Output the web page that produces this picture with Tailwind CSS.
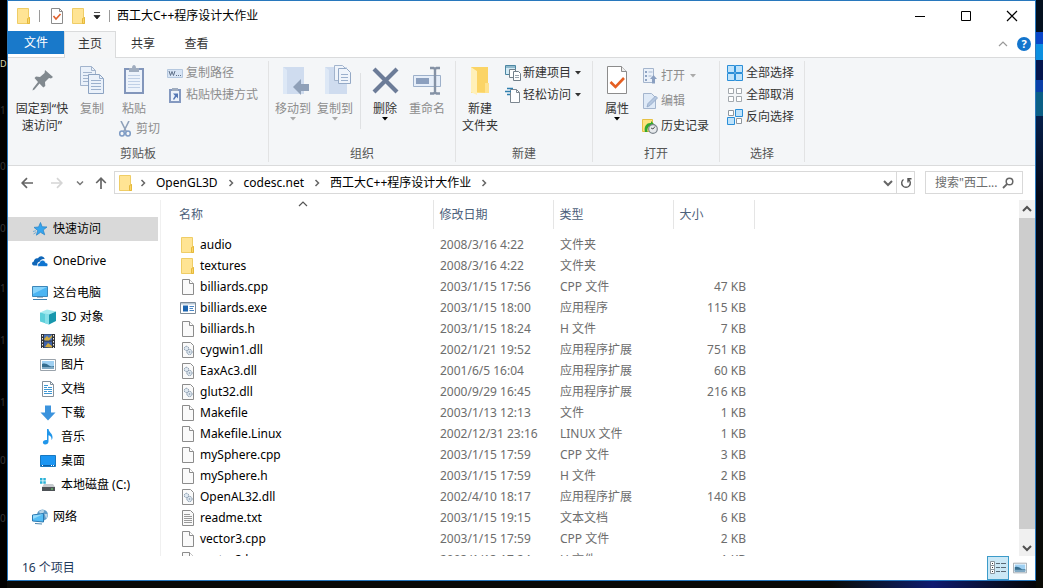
<!DOCTYPE html>
<html lang="zh-CN">
<head>
    <meta charset="UTF-8">
    <meta name="viewport" content="width=device-width, initial-scale=1.0">
    <title>西工大C++程序设计大作业</title>
    <script src="https://cdn.jsdelivr.net/npm/@tailwindcss/browser@4"></script>
</head>
<body class="h-screen overflow-hidden bg-black font-['Noto_Sans','Noto_Sans_CJK_SC',sans-serif] text-xs leading-4 text-black">

<!-- Icon set -->
<svg class="hidden" xmlns="http://www.w3.org/2000/svg">
    <symbol id="folder" viewBox="0 0 16 16">
        <path d="M1.500.5h11v9h1v6h-12z" fill="#ffe494" stroke="#efcd66"/>
        <path d="M11.500 10.500l2-1v6h-2z" fill="#fbd668" stroke="#e5b93c"/>
    </symbol>
    <symbol id="big-folder" viewBox="0 0 20 32">
        <path d="M1 2h17v15h-1v11H1z" fill="#ffe08a"/>
        <path d="M1 2l6 4v24l-6-3z" fill="#fff0b8"/>
        <path d="M7 27V6L1 2h1l16 0v16l1 1v9z" fill="#fbd465"/>
        <path d="M15 18h4v10h-4z" fill="#ffe38f"/>
    </symbol>
    <symbol id="page" viewBox="0 0 16 16">
        <path d="M2.500.5h7l4 4v11h-11z" fill="#fafafa" stroke="#8c8c8c"/>
        <path d="M9.500.5v4h4" fill="#fff" stroke="#8c8c8c"/>
    </symbol>
    <symbol id="txt" viewBox="0 0 16 16">
        <path d="M2.500.5h8l3 3v12h-11z" fill="#fafafa" stroke="#8c8c8c"/>
        <path d="M4 4.500h6M4 6.500h8M4 8.500h8M4 10.500h8M4 12.500h8" stroke="#9a9a9a"/>
    </symbol>
    <symbol id="dll" viewBox="0 0 16 16">
        <path d="M2.500.5h8l3 3v12h-11z" fill="#fafafa" stroke="#8c8c8c"/>
        <circle cx="6.500" cy="6.500" r="2.200" fill="#dfe8f0" stroke="#8194a8" stroke-dasharray="1.500 .6"/>
        <circle cx="9.500" cy="10" r="2.600" fill="#dfe8f0" stroke="#8194a8" stroke-dasharray="1.500 .6"/>
        <circle cx="9.500" cy="10" r=".8" fill="#8194a8"/>
    </symbol>
    <symbol id="exe" viewBox="0 0 16 16">
        <path d="M.5 2.500h15v11H.5z" fill="#fff" stroke="#7d8b98"/>
        <path d="M1 3h14v1.500H1z" fill="#b9c8d6"/>
        <path d="M3 5.500h5v6H3z" fill="#1b64b0"/>
        <path d="M9.500 6.500H14M9.500 8.500H13M9.500 10.500H14" stroke="#4a87c6"/>
    </symbol>
    <symbol id="star" viewBox="0 0 16 16">
        <path d="M8.500 1.500l1.600 4.300 4.900.2-3.800 3 1.500 4.800-4.200-2.500-4.100 2.900 1.300-4.800L2 6.400l4.600-.4z" fill="#35a5ee" stroke="#2f86c8" stroke-width=".8"/>
        <path d="M1 10.500l3-.8M1.500 13l2.500-1.500" stroke="#5a9fd0" stroke-width=".8"/>
    </symbol>
    <symbol id="onedrive" viewBox="0 0 16 16">
        <path d="M1.800 12.500C-.6 12-.4 8.900 1.900 8.600 1.900 6 4 4.700 6 5.300 7 3.400 9.400 2.600 11.300 4c.9.700 1.200 1.400 1.400 2.200-2.200-.5-4.200.6-4.800 2.600-2.200.1-3.100 2-2.500 3.700z" fill="#0f66b8"/>
        <path d="M7 13.500c-2-.3-1.800-3.200.4-3.500.3-2.400 2.600-3.500 4.500-2.500 1 .4 1.500 1.300 1.600 2.200 2.700 0 3.200 3.300 1 3.800z" fill="#0f74d0" stroke="#fff" stroke-width=".6"/>
    </symbol>
    <symbol id="pc" viewBox="0 0 16 16">
        <path d="M.5 1.500h15v10H.5z" fill="#4bb5f3" stroke="#3d86b8"/>
        <path d="M1 2h14L1 9z" fill="#86d3fb"/>
        <path d="M5 12.500h6" stroke="#a5b7c5"/>
        <path d="M1 14.500h14" stroke="#3e7fae"/>
    </symbol>
    <symbol id="cube" viewBox="0 0 16 16">
        <path d="M0 3.500L7 .5l9 2-7 3z" fill="#a5ebf0"/>
        <path d="M0 3.500l9 2v10L0 12.500z" fill="#5ccfda"/>
        <path d="M9 5.500l7-3v9.500l-7 3.500z" fill="#1797ad"/>
        <path d="M5 4.600l4 .9v10L5 14.200z" fill="#86dfe8"/>
    </symbol>
    <symbol id="video" viewBox="0 0 16 16">
        <path d="M1 1h14v14H1z" fill="#303338"/>
        <path d="M4 1.500h8v6H4z" fill="#4a73b8"/>
        <path d="M4 8.500h8v6H4z" fill="#3f62a8"/>
        <path d="M4 6l3-3 2 2 3-3v2L9 7.500H5zM5 14l3-4 4 3v1.500z" fill="#d3ab3c"/>
        <path d="M2.500 2v13M13.500 2v13" stroke="#eee" stroke-dasharray="1.500 1.500"/>
    </symbol>
    <symbol id="picture" viewBox="0 0 16 16">
        <path d="M.5 2.500h15v11H.5z" fill="#fff" stroke="#9aa3ab"/>
        <path d="M2 4h12v8H2z" fill="#9fd0f2"/>
        <path d="M2 7c3-1 5 0 7 1.500s4 1 5 .5v3H2z" fill="#356d8f"/>
        <path d="M2 10h12v2H2z" fill="#7fa9c4"/>
    </symbol>
    <symbol id="document" viewBox="0 0 16 16">
        <path d="M2.500.5h8l3 3v12h-11z" fill="#fff" stroke="#84919c"/>
        <path d="M10.500.5v3h3" fill="none" stroke="#84919c"/>
        <path d="M4 4.500h4M4 6.500h3M8 6.500h4M4 8.500h8M4 10.500h3M8 10.500h4M4 12.500h8" stroke="#3e97d3"/>
    </symbol>
    <symbol id="download" viewBox="0 0 16 16">
        <path d="M5 .5h6v7h4.500L8 15.500.5 7.500H5z" fill="#3b93dd"/>
    </symbol>
    <symbol id="music" viewBox="0 0 16 16">
        <path d="M7 0h1.500c.5 3.500 4.500 4.500 4 9-.2 1-.6 1.700-1 2 .3-3-1-4-3-4.700V12.500c0 1.800-1.500 3-3.300 3S2.500 14 3 12.800c.5-1.500 2.500-2.300 4-1.700z" fill="#2196ea"/>
    </symbol>
    <symbol id="desktop" viewBox="0 0 16 16">
        <path d="M.5 2.500h15v11H.5z" fill="#1b96f3" stroke="#1878c0"/>
        <path d="M1 12.500h14" stroke="#0d5ea6"/>
        <path d="M2 12.500h2M11 12.500h3" stroke="#fff" stroke-dasharray="1 1"/>
    </symbol>
    <symbol id="disk" viewBox="0 0 16 16">
        <path d="M0 1h2.500v2.500H0zM3.300 1h2.500v2.500H3.300zM0 4.300h2.500v2.500H0zM3.300 4.300h2.500v2.500H3.300z" fill="#2ab2d8"/>
        <path d="M4 7h9l2 3H2z" fill="#c6cace"/>
        <path d="M2 10h13v4H2z" fill="#4e5357"/>
        <path d="M11 12h2" stroke="#6fe36f"/>
    </symbol>
    <symbol id="network" viewBox="0 0 16 16">
        <circle cx="10.500" cy="6" r="5.500" fill="#5f9cc8"/>
        <path d="M7 2.500c1.500-1.500 4-2 5.500-1L11 4.500l-3 .5zM12.500 5l3 0c.3 2-.3 3.500-1.500 4.500z" fill="#b9d4e6"/>
        <path d="M.5 6l11-1.500v8.500L.5 12z" fill="#55bdf5" stroke="#2a78b0"/>
        <path d="M1 6.500L11 5.200 1 10z" fill="#94dbfc"/>
        <path d="M3 14.500l7 .5" stroke="#4c86ae"/>
    </symbol>
    <symbol id="check-page" viewBox="0 0 16 16">
        <path d="M2.500.5h8l3 3v12h-11z" fill="#fff" stroke="#8c8c8c"/>
        <path d="M10.500.5v3h3" fill="none" stroke="#8c8c8c"/>
        <path d="M4.500 8l2.500 3 4.500-5" fill="none" stroke="#e0602c" stroke-width="1.600"/>
    </symbol>
    <symbol id="properties" viewBox="0 0 24 32">
        <path d="M2.500 1.500h14l5 5v22h-19z" fill="#fff" stroke="#8c8c8c"/>
        <path d="M16.500 1.500v5h5" fill="#eee" stroke="#8c8c8c"/>
        <path d="M5.500 17l5 5 8.500-9" fill="none" stroke="#e55f22" stroke-width="2.600"/>
    </symbol>
    <symbol id="pin" viewBox="0 0 24 32">
        <path d="M15 5l8 7-2 1.500-2-.4-4 4 .3 4-2 1.400L9.500 18.500 4.500 24.500 2.500 25.500 3 23.500 8 17 4.500 13 6 11.500l4 .4 4.600-4z" fill="#81898f"/>
    </symbol>
    <symbol id="copy" viewBox="0 0 24 32">
        <path d="M.5 1.500h11l4 4v15H.5z" fill="#eaf1fa" stroke="#a2b4cd"/>
        <path d="M11.500 1.500v4h4M3 7.500h9M3 10.500h5M3 13.500h5M3 16.500h5" fill="none" stroke="#a2b4cd"/>
        <path d="M8.500 9.500h11l4 4v15h-15z" fill="#eaf1fa" stroke="#8ca3c2"/>
        <path d="M19.500 9.500v4h4M11 15.500h10M11 18.500h10M11 21.500h10M11 24.500h10" fill="none" stroke="#9bb0cd"/>
    </symbol>
    <symbol id="paste" viewBox="0 0 24 32">
        <path d="M2 3h20v26H2z" fill="#8296bb"/>
        <path d="M4 5h16v22H4z" fill="#edf3fb"/>
        <path d="M7 3h3c0-4 4-4 4 0h3v4H7z" fill="#a0adbf"/>
        <path d="M6 10.500h12M6 13.500h12M6 16.500h12M6 19.500h12M6 22.500h12" stroke="#c0d0e6"/>
    </symbol>
    <symbol id="scissors" viewBox="0 0 16 16">
        <path d="M4 0l5.500 11M12 0L6.500 11" stroke="#8fa1ba" stroke-width="1.600"/>
        <ellipse cx="5" cy="12.500" rx="2.300" ry="2.500" fill="none" stroke="#7e9bc4" stroke-width="1.500"/>
        <ellipse cx="11" cy="12.500" rx="2.300" ry="2.500" fill="none" stroke="#7e9bc4" stroke-width="1.500"/>
    </symbol>
    <symbol id="path" viewBox="0 0 16 16">
        <path d="M.5 4.500h15v8H.5z" fill="#d8e5f5" stroke="#b5c8df"/>
        <path d="M2 6l1.500 4.500L5 6.500l1.500 4L8 6" fill="none" stroke="#60718a"/>
        <path d="M9 10.500h6" stroke="#60718a" stroke-dasharray="1 1"/>
    </symbol>
    <symbol id="shortcut" viewBox="0 0 16 16">
        <path d="M2 2h12v14H2z" fill="#8499c0"/>
        <path d="M4 4h8v10H4z" fill="#edf3fb"/>
        <path d="M5 1h6v3H5z" fill="#a0adbf"/>
        <path d="M6 6.500h5v5L9.300 9.800 7 13l-1-1 2-3.300z" fill="#5578b5"/>
    </symbol>
    <symbol id="move-to" viewBox="0 0 28 32">
        <path d="M1 2h21v27H1z" fill="#cfdcef"/>
        <path d="M1 2l4 3v24H1z" fill="#dde8f6"/>
        <path d="M11 22l8-8v5h8v7h-8v4z" fill="#8fa0b8"/>
    </symbol>
    <symbol id="copy-to" viewBox="0 0 28 32">
        <path d="M1 2h22v27H1z" fill="#cfdcef"/>
        <path d="M1 2l4 3v24H1z" fill="#dde8f6"/>
        <path d="M10.500.5h8l3 3v12h-11z" fill="#eff4fb" stroke="#a2b4cd"/>
        <path d="M14.500 3.500h8l4 4v11h-12z" fill="#eff4fb" stroke="#94a9c6"/>
        <path d="M17 9.500h7M17 12.500h7M17 15.500h7" stroke="#9bb0cd"/>
    </symbol>
    <symbol id="delete" viewBox="0 0 28 32">
        <path d="M3 4l23 23M26 4L3 27" stroke="#6c7c98" stroke-width="4.200"/>
    </symbol>
    <symbol id="rename" viewBox="0 0 28 32">
        <path d="M.5 10.500h27v11H.5z" fill="#e6eef9" stroke="#9db0ca"/>
        <path d="M3 13h13v6H3z" fill="#8b9fbe"/>
        <path d="M17 3h3.500l1.500 1 1.500-1H27M22 4v24M17 28.500h3.500l1.500-1 1.500 1H27" fill="none" stroke="#8592a5" stroke-width="2.400"/>
    </symbol>
    <symbol id="new-item" viewBox="0 0 16 16">
        <path d="M.5.5h10v9H.5z" fill="#d3ecf7" stroke="#4c87a2"/>
        <path d="M1 2h9" stroke="#4c87a2"/>
        <path d="M4.500 4.500h6v8h-6z" fill="#fff" stroke="#72808a"/>
        <path d="M8.500 6.500h5l2 2v7h-7z" fill="#fff" stroke="#72808a"/>
        <path d="M10 10.500h4M10 12.500h4" stroke="#9aa5ae"/>
    </symbol>
    <symbol id="easy-access" viewBox="0 0 16 16">
        <path d="M5.500 2.500h6l3 3v10h-9z" fill="#fff" stroke="#7c8790"/>
        <path d="M11.500 2.500v3h3" fill="none" stroke="#7c8790"/>
        <path d="M2 1.500h6M0 4.500h6M2 7.500h3" stroke="#2f7fae" stroke-width="1.400"/>
    </symbol>
    <symbol id="open" viewBox="0 0 16 16">
        <path d="M1.500.5h10v14h-10z" fill="#eaf1fa" stroke="#a4b5cd"/>
        <path d="M3 3h2v2H3zM3 7h2v2H3zM3 11h2v2H3z" fill="#8fa4c3"/>
        <path d="M6.500 4h4M6.500 8h3" stroke="#a4b5cd"/>
        <path d="M11.500 7l3.500 4h-2v4.500h-3V11H8z" fill="#8a9fc0"/>
    </symbol>
    <symbol id="edit" viewBox="0 0 16 16">
        <path d="M1.500.5h8l4 4v11h-12z" fill="#dfeaf7" stroke="#a4b5cd"/>
        <path d="M5 14l1-3.500L13.500 3l2 2L8 12.500z" fill="#b5c7df" stroke="#8fa6c6" stroke-width=".8"/>
    </symbol>
    <symbol id="history" viewBox="0 0 16 16">
        <path d="M.5 1.500h10v12H.5z" fill="#fde27e" stroke="#e6c145"/>
        <path d="M3 14C1.500 8 5 4.500 9 5V3l4 4-4 3V8C6.500 8 5 10 5.500 14z" fill="#31a82f"/>
        <circle cx="11" cy="11" r="4.300" fill="#e6e9ec" stroke="#7c858d" stroke-width="1.200"/>
        <path d="M11 11l2-2.500M11 11l-2-1" stroke="#555"/>
    </symbol>
    <symbol id="select-all" viewBox="0 0 16 16">
        <path d="M.5.500h7v7h-7zM8.500.5h7v7h-7zM.5 8.500h7v7h-7zM8.500 8.500h7v7h-7z" fill="#bfe3fb" stroke="#2b8fd8"/>
    </symbol>
    <symbol id="select-none" viewBox="0 0 16 16">
        <path d="M1.500 1.500h5v5h-5zM9.500 1.500h5v5h-5zM1.500 9.500h5v5h-5zM9.500 9.500h5v5h-5z" fill="#fff" stroke="#a3a9ae"/>
    </symbol>
    <symbol id="select-invert" viewBox="0 0 16 16">
        <path d="M1.500 1.500h5v5h-5zM9.500 9.500h5v5h-5z" fill="#fff" stroke="#8e979e"/>
        <path d="M8.500.5h7v7h-7zM.5 8.500h7v7h-7z" fill="#bfe3fb" stroke="#2b8fd8"/>
    </symbol>
    <symbol id="caret" viewBox="0 0 6 4">
        <path d="M0 0h6L3 3.500z" fill="currentColor"/>
    </symbol>
    <symbol id="chevron-right" viewBox="0 0 6 8">
        <path d="M1.500 1l3 3-3 3" fill="none" stroke="currentColor" stroke-width="1.500"/>
    </symbol>
    <symbol id="chevron-down" viewBox="0 0 10 8">
        <path d="M1 2l4 4 4-4" fill="none" stroke="currentColor" stroke-width="2"/>
    </symbol>
    <symbol id="chevron-up" viewBox="0 0 10 8">
        <path d="M1 6l4-4 4 4" fill="none" stroke="currentColor" stroke-width="1.200"/>
    </symbol>
    <symbol id="arrow-left" viewBox="0 0 12 12">
        <path d="M12 6H1.500M6 1.200L1.200 6 6 10.800" fill="none" stroke="currentColor" stroke-width="1.700"/>
    </symbol>
</svg>

<div class="flex h-full">
    <!-- Desktop, left edge -->
    <div class="relative w-[7px] shrink-0 bg-black text-[10px] text-[#333]">
        <span class="absolute top-14 left-0 text-[9px] text-[#d8d4b0]">D</span>
        <span class="absolute top-[102px] left-0">1</span>
        <span class="absolute top-[158px] left-0">0</span>
        <span class="absolute top-[220px] left-0">0</span>
        <span class="absolute top-[280px] left-0">1</span>
        <span class="absolute top-[332px] left-0">1</span>
        <span class="absolute top-[394px] left-0">1</span>
        <span class="absolute top-[452px] left-0">0</span>
        <span class="absolute top-[510px] left-0">0</span>
    </div>

    <div class="flex min-w-0 flex-1 flex-col">
        <div class="flex min-h-0 flex-1 flex-col border border-[#2878bd] bg-white">

            <!-- Title bar -->
            <header class="flex h-[30px] shrink-0 items-center">
                <svg class="ml-2 size-4"><use href="#folder"/></svg>
                <span class="ml-[7px] h-3 w-px bg-[#9a9a9a]"></span>
                <button class="ml-[9px]" aria-label="属性"><svg class="size-4"><use href="#check-page"/></svg></button>
                <button class="ml-1.5" aria-label="新建文件夹"><svg class="size-4"><use href="#folder"/></svg></button>
                <button class="ml-1.5" aria-label="自定义快速访问工具栏">
                    <svg class="h-2 w-2" viewBox="0 0 8 8"><path d="M1 .5h6M1 3.500h6L4 7z" fill="#222" stroke="#222" stroke-width=".8"/></svg>
                </button>
                <span class="ml-2 h-3 w-px bg-[#9a9a9a]"></span>
                <h1 class="ml-[7px]">西工大C++程序设计大作业</h1>
                <div class="ml-auto flex">
                    <button class="flex w-[46px] justify-center" aria-label="最小化"><svg class="size-3" viewBox="0 0 12 12"><path d="M1 6.500h10" stroke="#000"/></svg></button>
                    <button class="flex w-[46px] justify-center" aria-label="最大化"><svg class="size-3" viewBox="0 0 12 12"><path d="M1.500 1.500h9v9h-9z" fill="none" stroke="#000"/></svg></button>
                    <button class="flex w-[46px] justify-center" aria-label="关闭"><svg class="size-3" viewBox="0 0 12 12"><path d="M1 1l10 10M11 1L1 11" stroke="#000" stroke-width="1.200"/></svg></button>
                </div>
            </header>

            <!-- Ribbon tabs -->
            <nav class="flex h-[27px] shrink-0 items-start border-b border-[#dadbdc] text-[#333]">
                <button class="h-[23px] w-14 bg-[#1979ca] text-white">文件</button>
                <button class="h-[27px] w-[52px] border border-b-0 border-[#dadbdc] bg-[#f5f6f7] pb-0.5">主页</button>
                <button class="h-[25px] w-[54px]">共享</button>
                <button class="h-[25px] w-[53px]">查看</button>
                <div class="mr-1 ml-auto flex h-[26px] items-center gap-[9px]">
                    <button class="text-[#999]" aria-label="最小化功能区"><svg class="h-2 w-2.5"><use href="#chevron-up"/></svg></button>
                    <button class="size-3.5 rounded-full bg-[#1375cd] text-[11px] leading-[14px] font-bold text-white" aria-label="帮助">?</button>
                </div>
            </nav>

            <!-- Ribbon -->
            <div class="flex h-[108px] shrink-0 border-b border-[#dadbdc] bg-[#f4f6f8] py-[3px] text-[#333]">
                <section class="flex w-[261px] shrink-0 flex-col border-r border-[#e2e3e4] pt-1">
                    <div class="flex flex-1 items-start pl-1.5">
                        <button class="w-14"><svg class="mx-auto h-8 w-6"><use href="#pin"/></svg><span class="mt-[3px] block leading-[17px]">固定到“快<br>速访问”</span></button>
                        <button class="ml-px w-[42px] text-[#8d8d8d]"><svg class="mx-auto h-8 w-6"><use href="#copy"/></svg><span class="mt-[3px] block leading-[17px]">复制</span></button>
                        <div class="w-[54px] text-[#8d8d8d]">
                            <button class="block w-[42px]"><svg class="mx-auto h-8 w-6"><use href="#paste"/></svg><span class="mt-[3px] block leading-[17px]">粘贴</span></button>
                            <button class="mt-1 ml-1 flex items-center gap-[3px]"><svg class="size-4"><use href="#scissors"/></svg>剪切</button>
                        </div>
                        <div class="flex flex-col text-[#8d8d8d]">
                            <button class="flex h-[22px] items-start gap-[3px]"><svg class="size-4"><use href="#path"/></svg>复制路径</button>
                            <button class="flex h-[22px] items-start gap-[3px]"><svg class="size-4"><use href="#shortcut"/></svg>粘贴快捷方式</button>
                        </div>
                    </div>
                    <h2 class="text-center text-[#555]">剪贴板</h2>
                </section>

                <section class="flex w-[187px] shrink-0 flex-col border-r border-[#e2e3e4] pt-1">
                    <div class="flex flex-1 items-start pl-[3px]">
                        <button class="w-[42px] text-[#8d8d8d]"><svg class="ml-2.5 h-8 w-7"><use href="#move-to"/></svg><span class="mt-[3px] block leading-[17px]">移动到</span><svg class="mx-auto h-1 w-1.5 text-[#aaa]"><use href="#caret"/></svg></button>
                        <button class="w-[42px] text-[#8d8d8d]"><svg class="ml-2.5 h-8 w-7"><use href="#copy-to"/></svg><span class="mt-[3px] block leading-[17px]">复制到</span><svg class="mx-auto h-1 w-1.5 text-[#aaa]"><use href="#caret"/></svg></button>
                        <span class="mr-[3px] ml-1 mt-2 h-14 w-px bg-[#dfe1e3]"></span>
                        <button class="w-[42px]"><svg class="mx-auto h-8 w-7"><use href="#delete"/></svg><span class="mt-[3px] block leading-[17px]">删除</span><svg class="mx-auto h-1 w-1.5 text-black"><use href="#caret"/></svg></button>
                        <button class="w-[42px] text-[#8d8d8d]"><svg class="mx-auto h-8 w-7"><use href="#rename"/></svg><span class="mt-[3px] block leading-[17px]">重命名</span></button>
                    </div>
                    <h2 class="text-center text-[#555]">组织</h2>
                </section>

                <section class="flex w-[137px] shrink-0 flex-col border-r border-[#e2e3e4] pt-1">
                    <div class="flex flex-1 items-start pl-[3px]">
                        <button class="w-[42px]"><svg class="mx-auto h-8 w-5"><use href="#big-folder"/></svg><span class="mt-[3px] block leading-[17px]">新建<br>文件夹</span></button>
                        <div class="ml-1 flex flex-col">
                            <button class="flex h-[22px] items-start gap-0.5"><svg class="size-4"><use href="#new-item"/></svg>新建项目<svg class="mt-1.5 ml-0.5 h-1 w-1.5"><use href="#caret"/></svg></button>
                            <button class="flex h-[22px] items-start gap-0.5"><svg class="size-4"><use href="#easy-access"/></svg>轻松访问<svg class="mt-1.5 ml-0.5 h-1 w-1.5"><use href="#caret"/></svg></button>
                        </div>
                    </div>
                    <h2 class="text-center text-[#555]">新建</h2>
                </section>

                <section class="flex w-[127px] shrink-0 flex-col border-r border-[#e2e3e4] pt-1">
                    <div class="flex flex-1 items-start pl-[3px]">
                        <button class="w-[42px]"><svg class="mx-auto h-8 w-6"><use href="#properties"/></svg><span class="mt-[3px] block leading-[17px]">属性</span><svg class="mx-auto h-1 w-1.5 text-black"><use href="#caret"/></svg></button>
                        <div class="mt-[3px] ml-1 flex flex-col">
                            <button class="flex h-[25px] items-start gap-[3px] text-[#8d8d8d]"><svg class="size-4"><use href="#open"/></svg>打开<svg class="mt-1.5 ml-0.5 h-1 w-1.5 text-[#aaa]"><use href="#caret"/></svg></button>
                            <button class="flex h-[25px] items-start gap-[3px] text-[#8d8d8d]"><svg class="size-4"><use href="#edit"/></svg>编辑</button>
                            <button class="flex items-start gap-[3px]"><svg class="size-4"><use href="#history"/></svg>历史记录</button>
                        </div>
                    </div>
                    <h2 class="text-center text-[#555]">打开</h2>
                </section>

                <section class="flex w-[85px] shrink-0 flex-col border-r border-[#e2e3e4] pt-1">
                    <div class="flex flex-1 flex-col pl-[7px]">
                        <button class="flex h-[22px] items-start gap-[3px]"><svg class="size-4"><use href="#select-all"/></svg>全部选择</button>
                        <button class="flex h-[22px] items-start gap-[3px]"><svg class="size-4"><use href="#select-none"/></svg>全部取消</button>
                        <button class="flex h-[22px] items-start gap-[3px]"><svg class="size-4"><use href="#select-invert"/></svg>反向选择</button>
                    </div>
                    <h2 class="text-center text-[#555]">选择</h2>
                </section>
            </div>

            <!-- Address bar -->
            <div class="flex h-[34px] shrink-0 items-start pt-[5px] pr-3">
                <div class="flex h-[23px] items-center">
                    <button class="ml-[13px] text-[#666]" aria-label="后退"><svg class="size-3"><use href="#arrow-left"/></svg></button>
                    <button class="ml-[18px] text-[#d5d5d5]" aria-label="前进"><svg class="size-3 rotate-180"><use href="#arrow-left"/></svg></button>
                    <button class="ml-[13px] text-[#777]" aria-label="最近浏览的位置"><svg class="h-1.5 w-2"><use href="#chevron-down"/></svg></button>
                    <button class="ml-[11px] text-[#666]" aria-label="上移"><svg class="size-3 rotate-90"><use href="#arrow-left"/></svg></button>
                </div>
                <div class="ml-[7px] flex h-[23px] flex-1 items-center border border-[#d9d9d9] pl-[3px]">
                    <svg class="size-4"><use href="#folder"/></svg>
                    <svg class="ml-1.5 h-2 w-1.5 text-[#666]"><use href="#chevron-right"/></svg>
                    <a href="#" class="ml-2.5">OpenGL3D</a>
                    <svg class="ml-2.5 h-2 w-1.5 text-[#666]"><use href="#chevron-right"/></svg>
                    <a href="#" class="ml-2.5">codesc.net</a>
                    <svg class="ml-2.5 h-2 w-1.5 text-[#666]"><use href="#chevron-right"/></svg>
                    <a href="#" class="ml-2.5">西工大C++程序设计大作业</a>
                    <svg class="ml-2.5 h-2 w-1.5 text-[#666]"><use href="#chevron-right"/></svg>
                    <button class="mr-[3px] ml-auto text-[#666]" aria-label="以前的位置"><svg class="h-2 w-2.5"><use href="#chevron-down"/></svg></button>
                    <button class="flex h-full w-[18px] items-center justify-center border-l border-[#d9d9d9]" aria-label="刷新">
                        <svg class="size-3" viewBox="0 0 12 12"><path d="M3.500 2.500A4.300 4.300 0 1 0 8.500 2.500M8 5.500V1.800h3.500" fill="none" stroke="#555" stroke-width="1.400"/></svg>
                    </button>
                </div>
                <label class="ml-2.5 flex h-[23px] w-[98px] items-center border border-[#d9d9d9] pr-2 pl-[9px]">
                    <input type="text" aria-label="搜索" placeholder="搜索&quot;西工..." class="min-w-0 flex-1 outline-none placeholder:text-[#6d6d6d]">
                    <svg class="size-3 shrink-0" viewBox="0 0 12 12"><circle cx="7.500" cy="4.500" r="3.300" fill="none" stroke="#666" stroke-width="1.500"/><path d="M5.200 6.800L1 11" stroke="#666" stroke-width="1.800"/></svg>
                </label>
            </div>

            <!-- Navigation pane and file list -->
            <div class="flex min-h-0 flex-1">
                <nav class="w-[153px] shrink-0 border-r border-[#f0f0f0] pt-[17px] pr-0.5">
                    <a href="#" class="mb-2 flex h-6 items-center gap-[5px] bg-[#d9d9d9] pl-6"><svg class="size-4"><use href="#star"/></svg>快速访问</a>
                    <a href="#" class="mb-2 flex h-6 items-center gap-[5px] pl-6"><svg class="size-4"><use href="#onedrive"/></svg>OneDrive</a>
                    <a href="#" class="flex h-6 items-center gap-[5px] pl-6"><svg class="size-4"><use href="#pc"/></svg>这台电脑</a>
                    <a href="#" class="flex h-6 items-center gap-[5px] pl-8"><svg class="size-4"><use href="#cube"/></svg>3D 对象</a>
                    <a href="#" class="flex h-6 items-center gap-[5px] pl-8"><svg class="size-4"><use href="#video"/></svg>视频</a>
                    <a href="#" class="flex h-6 items-center gap-[5px] pl-8"><svg class="size-4"><use href="#picture"/></svg>图片</a>
                    <a href="#" class="flex h-6 items-center gap-[5px] pl-8"><svg class="size-4"><use href="#document"/></svg>文档</a>
                    <a href="#" class="flex h-6 items-center gap-[5px] pl-8"><svg class="size-4"><use href="#download"/></svg>下载</a>
                    <a href="#" class="flex h-6 items-center gap-[5px] pl-8"><svg class="size-4"><use href="#music"/></svg>音乐</a>
                    <a href="#" class="flex h-6 items-center gap-[5px] pl-8"><svg class="size-4"><use href="#desktop"/></svg>桌面</a>
                    <a href="#" class="mb-2 flex h-6 items-center gap-[5px] pl-8"><svg class="size-4"><use href="#disk"/></svg>本地磁盘 (C:)</a>
                    <a href="#" class="flex h-6 items-center gap-[5px] pl-6"><svg class="size-4"><use href="#network"/></svg>网络</a>
                </nav>

                <main class="min-w-0 flex-1 overflow-hidden pl-3">
                    <table class="w-[581px] table-fixed">
                        <colgroup>
                            <col class="w-[260px]">
                            <col class="w-[120px]">
                            <col class="w-[120px]">
                            <col class="w-[81px]">
                        </colgroup>
                        <thead>
                            <tr class="h-[29px] text-left text-[#4c607a]">
                                <th class="relative border-r border-[#e5e5e5] pl-1.5 font-normal">名称<svg class="absolute top-0 left-[125px] h-2 w-2.5 text-[#555]"><use href="#chevron-up"/></svg></th>
                                <th class="border-r border-[#e5e5e5] pl-1.5 font-normal">修改日期</th>
                                <th class="border-r border-[#e5e5e5] pl-1.5 font-normal">类型</th>
                                <th class="border-r border-[#e5e5e5] pl-1.5 font-normal">大小</th>
                            </tr>
                        </thead>
                        <tbody id="files" class="text-[#6d6d6d] before:block before:h-[5px]"></tbody>
                    </table>
                </main>

                <!-- Scrollbar -->
                <div class="flex w-4 shrink-0 flex-col bg-[#f0f0f0] text-[#505050]">
                    <button class="flex h-[18px] items-center justify-center" aria-label="向上滚动"><svg class="h-2 w-2.5 rotate-180"><use href="#chevron-down"/></svg></button>
                    <div class="flex-1 bg-[#cdcdcd]"></div>
                    <button class="mt-2.5 flex h-[17px] items-center justify-center" aria-label="向下滚动"><svg class="h-2 w-2.5"><use href="#chevron-down"/></svg></button>
                </div>
            </div>

            <!-- Status bar -->
            <footer class="flex h-6 shrink-0 items-center pl-3.5 text-[#1e395b]">
                <span>16 个项目</span>
                <div class="ml-auto flex h-full items-center pr-1">
                    <button class="flex h-full w-[22px] items-center justify-center border border-[#3c9bc9] bg-[#cbe8f6]" aria-label="详细信息">
                        <svg class="h-4 w-4" viewBox="0 0 16 16"><path d="M.5 1.500h4v4h-4zM.5 5.500h4v4h-4zM.5 9.500h4v4h-4z" fill="#fff" stroke="#8a949c"/><path d="M2 3.500h1M2 7.500h1M2 11.500h1" stroke="#333"/><path d="M6 3.500h4M11 3.500h5M6 7.500h4M11 7.500h5M6 11.500h4M11 11.500h5" stroke="#5a6a76"/></svg>
                    </button>
                    <button class="flex h-full w-[22px] items-center justify-center" aria-label="大缩略图"><svg class="h-3.5 w-3.5"><use href="#picture"/></svg></button>
                </div>
            </footer>
        </div>
        <!-- Desktop, bottom edge -->
        <div class="flex h-[7px] shrink-0">
            <div class="w-4/5 bg-[#0a0a07]"></div>
            <div class="flex-1 bg-linear-to-r from-[#0a0a07] via-[#101a70] to-[#050508]"></div>
        </div>
    </div>

    <!-- Desktop, right edge -->
    <div class="flex w-[7px] shrink-0 flex-col">
        <div class="h-8 bg-[#03101f]"></div>
        <div class="h-3 bg-[#0a46c8]"></div>
        <div class="h-4 bg-[#0c8fe0]"></div>
        <div class="h-5 bg-[#04164e]"></div>
        <div class="h-3 bg-[#0a3fa8]"></div>
        <div class="h-6 bg-[#0b5f86]"></div>
        <div class="h-20 bg-linear-to-b from-[#06204c] to-[#040a1a]"></div>
        <div class="flex-1 bg-linear-to-b from-[#040a1a] to-[#0a0a05]"></div>
    </div>
</div>

<script>
    const files = [
        ['folder', 'audio', '2008/3/16 4:22', '文件夹', ''],
        ['folder', 'textures', '2008/3/16 4:22', '文件夹', ''],
        ['page', 'billiards.cpp', '2003/1/15 17:56', 'CPP 文件', '47 KB'],
        ['exe', 'billiards.exe', '2003/1/15 18:00', '应用程序', '115 KB'],
        ['page', 'billiards.h', '2003/1/15 18:24', 'H 文件', '7 KB'],
        ['dll', 'cygwin1.dll', '2002/1/21 19:52', '应用程序扩展', '751 KB'],
        ['dll', 'EaxAc3.dll', '2001/6/5 16:04', '应用程序扩展', '60 KB'],
        ['dll', 'glut32.dll', '2000/9/29 16:45', '应用程序扩展', '216 KB'],
        ['page', 'Makefile', '2003/1/13 12:13', '文件', '1 KB'],
        ['page', 'Makefile.Linux', '2002/12/31 23:16', 'LINUX 文件', '1 KB'],
        ['page', 'mySphere.cpp', '2003/1/15 17:59', 'CPP 文件', '3 KB'],
        ['page', 'mySphere.h', '2003/1/15 17:59', 'H 文件', '2 KB'],
        ['dll', 'OpenAL32.dll', '2002/4/10 18:17', '应用程序扩展', '140 KB'],
        ['txt', 'readme.txt', '2003/1/15 19:15', '文本文档', '6 KB'],
        ['page', 'vector3.cpp', '2003/1/15 17:59', 'CPP 文件', '2 KB'],
        ['page', 'vector3.h', '2003/1/13 17:24', 'H 文件', '1 KB'],
    ];

    document.getElementById('files').innerHTML = files.map(([icon, name, date, type, size]) => `
        <tr class="h-[21px]">
            <td class="pl-[7px]"><span class="flex items-center gap-1 text-black"><svg class="size-4"><use href="#${icon}"/></svg>${name}</span></td>
            <td class="pl-[7px]">${date}</td>
            <td class="pl-[7px]">${type}</td>
            <td class="pr-2 text-right">${size}</td>
        </tr>`).join('');
</script>
</body>
</html>
